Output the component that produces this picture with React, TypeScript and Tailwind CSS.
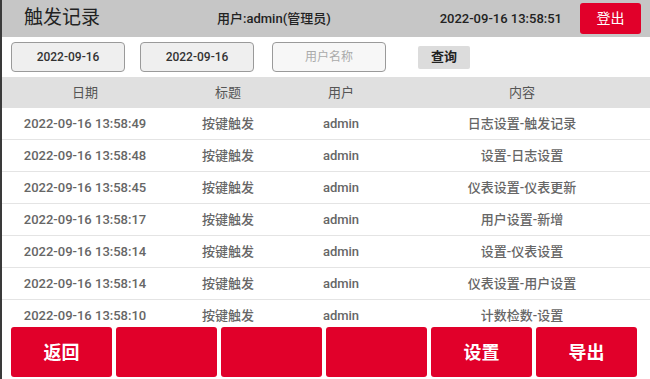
const rows = [
  ["2022-09-16 13:58:49", "按键触发", "admin", "日志设置-触发记录"],
  ["2022-09-16 13:58:48", "按键触发", "admin", "设置-日志设置"],
  ["2022-09-16 13:58:45", "按键触发", "admin", "仪表设置-仪表更新"],
  ["2022-09-16 13:58:17", "按键触发", "admin", "用户设置-新增"],
  ["2022-09-16 13:58:14", "按键触发", "admin", "设置-仪表设置"],
  ["2022-09-16 13:58:14", "按键触发", "admin", "仪表设置-用户设置"],
  ["2022-09-16 13:58:10", "按键触发", "admin", "计数检数-设置"],
];

const footer = ["返回", "", "", "", "设置", "导出"];

const cols = "grid grid-cols-[166px_120px_106px_1fr]";

export default function App() {
  return (
    <div
      className="w-[650px] h-[379px] flex flex-col overflow-hidden bg-white border-l-2 border-[#3a3a3a]"
      style={{ fontFamily: 'Roboto, "Noto Sans CJK SC", sans-serif' }}
    >
      {/* Header */}
      <div className="h-[37px] shrink-0 bg-[#c6c6c6] flex items-center pl-[22px] pr-[9px] text-[#222]">
        <div className="text-[19px] w-[193px]">触发记录</div>
        <div className="text-[13px] font-medium">用户:admin(管理员)</div>
        <div className="text-[13px] font-medium ml-auto mr-[18px]">2022-09-16 13:58:51</div>
        <button className="w-[61px] h-[31px] bg-[#e1002a] text-white text-[14px] rounded-[3px]">登出</button>
      </div>

      {/* Filters */}
      <div className="h-[40px] shrink-0 flex items-center pl-[9px]">
        <div className="w-[114px] h-[30px] rounded-[4px] border border-[#9a9a9a] bg-[#efefef] flex items-center justify-center text-[12px] text-[#333] font-medium">
          2022-09-16
        </div>
        <div className="ml-[15px] w-[114px] h-[30px] rounded-[4px] border border-[#9a9a9a] bg-[#efefef] flex items-center justify-center text-[12px] text-[#333] font-medium">
          2022-09-16
        </div>
        <div className="ml-[18px] w-[114px] h-[30px] rounded-[4px] border border-[#9a9a9a] bg-[#f7f7f7] flex items-center justify-center text-[12px] text-[#aaa]">
          用户名称
        </div>
        <button className="ml-[32px] w-[52px] h-[23px] rounded-[2px] bg-[#dcdcdc] text-[13px] font-bold text-[#222]">查询</button>
      </div>

      {/* Table */}
      <div className="h-[249px] shrink-0 overflow-hidden">
        <div className={`${cols} h-[31px] bg-[#e0e0e0] items-center text-[13px] text-[#555] text-center`}>
          <div>日期</div>
          <div>标题</div>
          <div>用户</div>
          <div>内容</div>
        </div>
        {rows.map((r, i) => (
          <div
            key={i}
            className={`${cols} h-[32px] items-center text-[13px] font-medium text-[#666] text-center border-b border-[#e4e4e4]`}
          >
            {r.map((c, j) => (
              <div key={j}>{c}</div>
            ))}
          </div>
        ))}
      </div>

      {/* Footer buttons */}
      <div className="flex gap-[4px] pl-[9px] pt-px">
        {footer.map((f, i) => (
          <button
            key={i}
            className="w-[101px] h-[50px] bg-[#e1002a] rounded-[3px] text-white text-[18px] font-bold"
          >
            {f}
          </button>
        ))}
      </div>
    </div>
  );
}
